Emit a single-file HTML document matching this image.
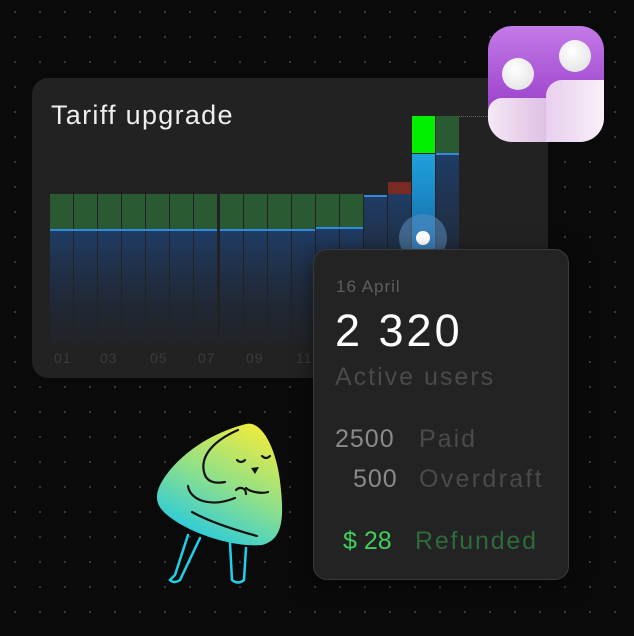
<!DOCTYPE html>
<html><head><meta charset="utf-8"><style>
*{margin:0;padding:0;box-sizing:border-box}
body{width:634px;height:636px;overflow:hidden;background:#0a0a0a;font-family:"Liberation Sans",sans-serif;position:relative;
background-image:radial-gradient(circle,#3a3a3a 1px,transparent 1.3px);background-size:25px 25px;background-position:2.5px -0.5px}
.card{position:absolute;left:32px;top:78px;width:516px;height:300px;border-radius:16px;background:#222;overflow:hidden}
.title{position:absolute;left:19px;top:22px;color:#eee;font-size:27px;letter-spacing:1.3px}
.lbl{position:absolute;top:272px;color:#3c3c3c;font-size:14px;letter-spacing:1px}
.tip{position:absolute;left:313px;top:249px;width:256px;height:331px;border-radius:14px;background:#232323;border:1px solid #3a3a3a;box-shadow:0 4px 20px rgba(0,0,0,.5)}
.t{position:absolute;white-space:nowrap;letter-spacing:2px}
.icon{position:absolute;left:488px;top:26px;width:116px;height:116px;border-radius:24px;background:linear-gradient(#c47ae8,#8a2cbf);overflow:hidden}
</style></head><body>
<div class="card">
<div class="title">Tariff upgrade</div>
<div class="lbl" style="left:22px">01</div>
<div class="lbl" style="left:68px">03</div>
<div class="lbl" style="left:118px">05</div>
<div class="lbl" style="left:166px">07</div>
<div class="lbl" style="left:214px">09</div>
<div class="lbl" style="left:264px">11</div>
</div>
<svg style="position:absolute;left:0;top:0" width="634" height="636">
<defs>
<linearGradient id="bl" x1="0" y1="0" x2="0" y2="1"><stop offset="0" stop-color="#1f3d66"/><stop offset="1" stop-color="#1f2533" stop-opacity=".3"/></linearGradient>
<linearGradient id="lb" x1="0" y1="0" x2="0" y2="1"><stop offset="0" stop-color="#1ea2dc"/><stop offset="1" stop-color="#1768a8"/></linearGradient>
<linearGradient id="mg" x1="0.8" y1="0" x2="0.3" y2="1"><stop offset="0" stop-color="#f2ec3a"/><stop offset="0.5" stop-color="#8fe08a"/><stop offset="1" stop-color="#1ec8e6"/></linearGradient>
</defs>
<g>
<g fill="#2a5a32">
<rect x="50" y="194" width="23" height="36"/><rect x="74" y="194" width="23" height="36"/><rect x="98" y="194" width="23" height="36"/><rect x="122" y="194" width="23" height="36"/><rect x="146" y="194" width="23" height="36"/><rect x="170" y="194" width="23" height="36"/><rect x="194" y="194" width="23" height="36"/>
<rect x="220" y="194" width="23" height="36"/><rect x="244" y="194" width="23" height="36"/><rect x="268" y="194" width="23" height="36"/><rect x="292" y="194" width="23" height="36"/><rect x="316" y="194" width="23" height="34"/><rect x="340" y="194" width="23" height="34"/>
</g>
<g fill="url(#bl)">
<rect x="50" y="230" width="23" height="116"/><rect x="74" y="230" width="23" height="116"/><rect x="98" y="230" width="23" height="116"/><rect x="122" y="230" width="23" height="116"/><rect x="146" y="230" width="23" height="116"/><rect x="170" y="230" width="23" height="116"/><rect x="194" y="230" width="23" height="116"/>
<rect x="220" y="230" width="23" height="116"/><rect x="244" y="230" width="23" height="116"/><rect x="268" y="230" width="23" height="116"/><rect x="292" y="230" width="23" height="116"/><rect x="316" y="228" width="23" height="118"/><rect x="340" y="228" width="23" height="118"/>
<rect x="364" y="196" width="23" height="150"/><rect x="388" y="194" width="23" height="152"/><rect x="436" y="154" width="23" height="192"/>
</g>
<g fill="#2f8ae0">
<rect x="50" y="229" width="167" height="2"/><rect x="220" y="229" width="95" height="2"/><rect x="316" y="227" width="47" height="2"/><rect x="364" y="195" width="23" height="2"/><rect x="436" y="153" width="23" height="2"/>
</g>
<rect x="388" y="182" width="23" height="12" fill="#7a2a22"/>
<rect x="412" y="116" width="23" height="37" fill="#00f000"/>
<rect x="412" y="154" width="23" height="95" fill="url(#lb)"/>
<rect x="436" y="116" width="23" height="37" fill="#2a5a32"/>
<line x1="459" y1="116.5" x2="490" y2="116.5" stroke="#666" stroke-dasharray="1 1"/>
<circle cx="423" cy="238" r="24" fill="#5a8ec0" opacity=".55"/>
<circle cx="423" cy="238" r="7" fill="#fff"/>
</g>
<path d="M246 424 C262 420 278 450 281 490 C284 520 282 540 262 545 C230 548 180 530 162 510 C152 498 158 485 170 470 C192 444 222 430 246 424Z" fill="url(#mg)"/>
<g fill="none" stroke="#111" stroke-width="2.2" stroke-linecap="round">
<path d="M238 430 C215 440 200 455 204 472 C206 482 215 484 225 482"/>
<path d="M188 486 C190 500 210 508 235 498"/>
<path d="M192 512 C210 522 235 530 257 536"/>
<path d="M237 460 q4 4 8 0"/><path d="M262 456 q4 4 8 0"/>
<path d="M246 488 C250 492 262 494 268 492"/>
<path d="M236 490 c4 -4 10 -2 10 4"/>
</g>
<path d="M251 468 l8 -1 l-4 7z" fill="#111"/>
<g fill="none" stroke="#20d0e8" stroke-width="2.5" stroke-linecap="round">
<path d="M188 535 L175 575 L170 580 q4 4 10 0 L200 538"/>
<path d="M230 543 L232 580 q6 5 12 0 L246 548"/>
</g>
</svg>
<div class="tip">
<div class="t" style="left:22px;top:27px;font-size:17px;color:#5e5e5e;letter-spacing:1px">16 April</div>
<div class="t" style="left:21px;top:55px;font-size:45px;color:#fff;letter-spacing:3px">2 320</div>
<div class="t" style="left:21px;top:113px;font-size:25px;color:#4a4a4a">Active users</div>
<div class="t" style="left:21px;top:175px;font-size:25px;color:#8a8a8a;letter-spacing:1px">2500</div>
<div class="t" style="left:105px;top:175px;font-size:25px;color:#4a4a4a">Paid</div>
<div class="t" style="left:39px;top:215px;font-size:25px;color:#8a8a8a;letter-spacing:1px">500</div>
<div class="t" style="left:105px;top:215px;font-size:25px;color:#4a4a4a;letter-spacing:2.3px">Overdraft</div>
<div class="t" style="left:29px;top:277px;font-size:25px;color:#3fcf5a;letter-spacing:0">$ 28</div>
<div class="t" style="left:101px;top:277px;font-size:25px;color:#2e6a3a;letter-spacing:1.8px">Refunded</div>
</div>
<div class="icon">
<div style="position:absolute;left:14px;top:32px;width:32px;height:32px;border-radius:50%;background:radial-gradient(circle at 40% 35%,#fff,#ddd)"></div>
<div style="position:absolute;left:71px;top:14px;width:32px;height:32px;border-radius:50%;background:radial-gradient(circle at 40% 35%,#fff,#ddd)"></div>
<div style="position:absolute;left:0;top:72px;width:70px;height:50px;border-radius:14px 0 0 0;background:linear-gradient(90deg,#f5e8f5,#d9b8e0)"></div>
<div style="position:absolute;left:58px;top:54px;width:62px;height:66px;border-radius:16px 0 0 0;background:linear-gradient(90deg,#e8cfee,#faf2fa)"></div>
</div>
</body></html>
